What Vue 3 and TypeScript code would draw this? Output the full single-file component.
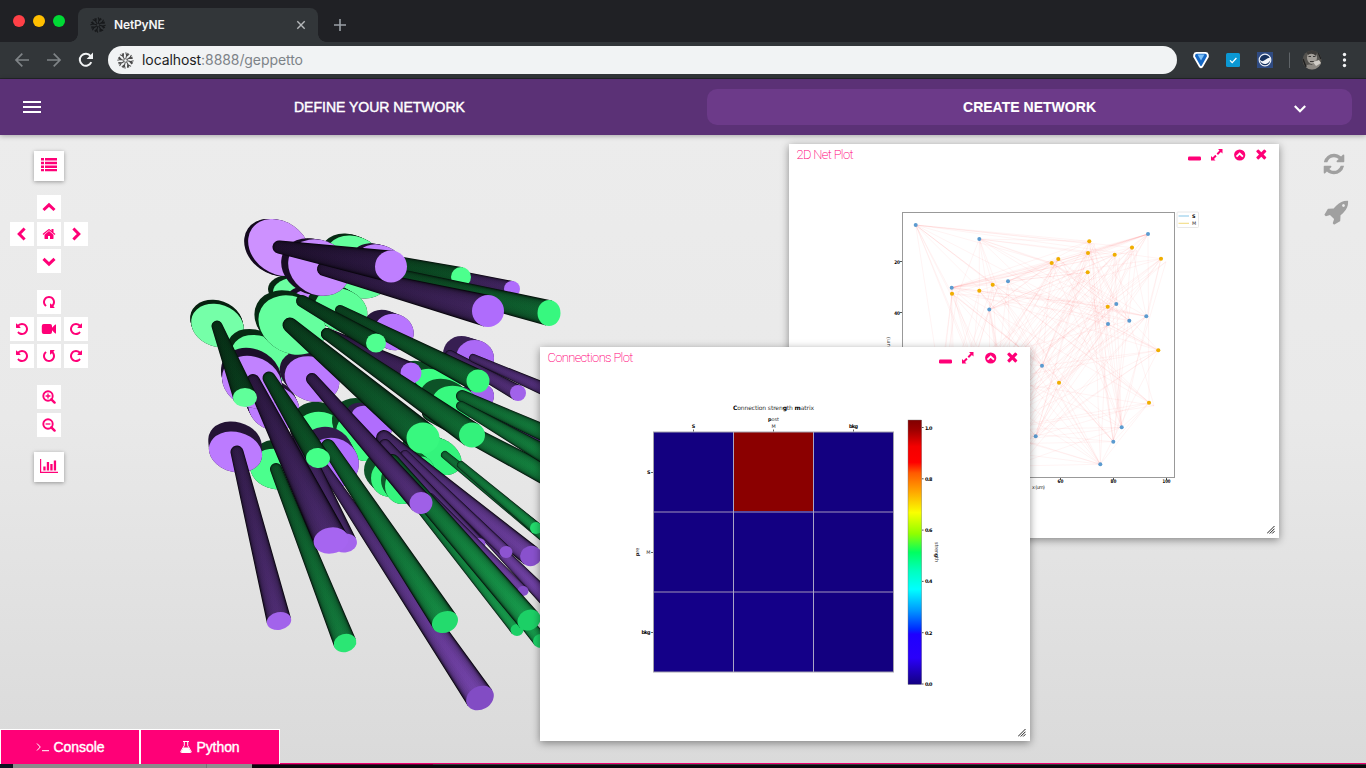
<script setup lang="ts">
type Hue = 'g' | 'p'
interface Soma { kind: 's'; hue: Hue; x: number; y: number; rx: number; ry: number; rot: number; dx: number; dy: number }
interface Tube { kind: 't'; hue: Hue; x0: number; y0: number; w0: number; x1: number; y1: number; rx: number; ry: number; rot: number }

const s = (hue: Hue, x: number, y: number, rx: number, ry: number, rot: number, dx: number, dy: number): Soma =>
  ({ kind: 's', hue, x, y, rx, ry, rot, dx, dy })
const t = (hue: Hue, x0: number, y0: number, w0: number, x1: number, y1: number, rx: number, ry: number, rot = 0): Tube =>
  ({ kind: 't', hue, x0, y0, w0, x1, y1, rx, ry, rot })

const shapes: (Soma | Tube)[] = [
  s('g', 357, 267, 36, 28, 40, -5, -2),
  s('p', 382, 263, 25, 17, 25, -5, -1),
  t('p', 420, 270, 7, 512, 289, 8, 8),
  t('g', 350, 256, 8, 461, 277, 10, 10),
  t('g', 385, 273, 7, 549, 313, 11.5, 13),
  s('g', 297, 292, 24, 15, 0, -5, -3),
  s('p', 306, 302, 14, 12, 0, -5, -3),
  s('g', 341, 310, 27, 21, 20, -7, -4),
  s('p', 279, 247.5, 33, 26, 35, -4, 0),
  s('p', 319, 267.5, 32, 27, 30, -7, -1),
  t('p', 324, 269, 7, 488, 311, 16, 16),
  t('p', 279, 247, 6.5, 391, 266.5, 16, 16),
  s('p', 475, 358, 19, 18, 10, -13, -4),
  s('p', 394, 332, 20, 18, 20, -11, -4),
  s('g', 217.5, 325.5, 27, 21, 20, -1, -4),
  t('p', 450, 355, 5, 518, 393, 8, 8),
  t('p', 473, 358, 4, 558, 395, 7, 7),
  s('p', 482, 396, 12, 12, 0, -8, -2),
  s('g', 437, 382, 24, 12, 15, -14, -8),
  s('g', 455, 403, 23, 17, 10, -12, -7),
  s('g', 262, 359, 32, 22, 25, -4, -6),
  s('p', 274, 408, 26, 22, 20, -3, -6),
  s('p', 252, 382, 31, 25, 25, -1, -8),
  s('g', 321, 430, 24, 18, 10, -3, -10),
  s('g', 363, 436, 28, 24, 30, -4, -13),
  s('p', 372, 422, 22, 14, 30, -5, -3),
  s('p', 312, 379, 28, 22, 20, -5, -6),
  s('p', 332, 463, 27, 25, 15, -6, -11),
  s('g', 390, 478, 19, 19, 0, -7, -8),
  s('g', 402, 486, 17, 18, 0, -4, -6),
  s('g', 439, 456, 24, 17, 30, -14, -6),
  s('g', 425, 471, 10, 15, -20, -10, -8),
  s('g', 292, 325, 35, 28, 28, -4, -5),
  t('p', 327, 334, 6, 411, 373, 10.5, 10.5),
  t('g', 340, 310, 5, 478, 381, 11.5, 11.5),
  t('g', 302, 301, 6, 376, 343, 10, 9.5),
  t('p', 470, 403, 4, 560, 452, 6, 6),
  t('g', 462, 396, 6, 560, 440, 9, 9),
  t('g', 430, 413, 8, 560, 482, 11, 11),
  t('g', 461, 406, 5, 560, 463, 10, 10),
  t('g', 327, 334, 6, 472, 435, 13, 12.5),
  t('g', 445, 455, 4, 560, 548, 7, 7),
  t('g', 461, 465, 4, 536, 528, 6, 6),
  t('p', 384, 438, 8, 531, 556, 11, 10, -20),
  t('p', 470, 520, 4, 552, 604, 9, 8),
  t('p', 405, 455, 5, 506, 552, 6.5, 6),
  t('p', 385, 445, 6, 479, 544, 6.5, 6),
  t('p', 430, 498, 5, 523, 591, 5.5, 5),
  t('g', 470, 555, 5, 541, 641, 8, 7),
  t('g', 395, 475, 5, 517, 630, 6.5, 6),
  t('g', 392, 462, 8, 529, 620, 12, 10, -30),
  t('g', 290, 325, 7.5, 423, 438, 16.5, 15.5),
  t('p', 324, 468, 5, 480, 698, 14.5, 11.5, -30),
  t('g', 328, 446, 7, 445, 622, 13.5, 10.5, -25),
  t('p', 312, 379, 6, 421, 503, 11.5, 11, -10),
  s('g', 276, 469, 26, 20, 10, 2, -9),
  t('p', 296, 430, 6, 345, 543, 12, 9.5, -10),
  t('g', 276, 469, 6, 345, 643, 11.5, 9, -15),
  t('p', 253, 381, 7, 331, 540.5, 17.5, 13, -10),
  t('g', 269, 378, 6.5, 318, 458, 12, 10, 5),
  t('g', 217, 326, 5.5, 245, 397.5, 12, 9.5),
  s('p', 235.5, 452, 27, 20, 15, -0.5, -10),
  t('p', 237, 452, 6.5, 279, 621, 12.3, 8.8, -10),
]

const clamp = (v: number) => Math.max(0, Math.min(1, v))
const mix = (a: number[], b: number[], k: number) => `rgb(${a.map((v, i) => Math.round(v + (b[i] - v) * k)).join(',')})`
const depth = (x: number, y: number) => clamp((x - 200 + (y - 220)) / 720)
function bodyColour(h: Hue, x: number, y: number) {
  const d = Math.pow(depth(x, y), 1.2)
  return h === 'g' ? mix([6, 32, 14], [24, 164, 80], d) : mix([20, 10, 30], [124, 72, 182], d)
}
function faceColour(h: Hue, x: number, y: number) {
  const d = depth(x, y)
  if (h === 'g') return d < 0.55 ? mix([142, 255, 184], [60, 255, 131], d / 0.55) : mix([60, 255, 131], [28, 208, 102], (d - 0.55) / 0.45)
  return d < 0.5 ? mix([216, 160, 255], [178, 110, 255], d / 0.5) : mix([178, 110, 255], [130, 76, 196], (d - 0.5) / 0.5)
}
function endWidth(c: Tube) {
  const len = Math.hypot(c.x1 - c.x0, c.y1 - c.y0)
  const nx = -(c.y1 - c.y0) / len
  const ny = (c.x1 - c.x0) / len
  const a = (c.rot * Math.PI) / 180
  const u = nx * Math.cos(a) + ny * Math.sin(a)
  const v = -nx * Math.sin(a) + ny * Math.cos(a)
  return { nx, ny, w: Math.hypot(c.rx * u, c.ry * v) }
}
function body(c: Tube, f: number) {
  const { nx, ny, w } = endWidth(c)
  const a = c.w0 * f
  const b = w * f
  return `M${c.x0 + nx * a} ${c.y0 + ny * a}A${a} ${a} 0 0 1 ${c.x0 - nx * a} ${c.y0 - ny * a}L${c.x1 - nx * b} ${c.y1 - ny * b}L${c.x1 + nx * b} ${c.y1 + ny * b}Z`
}
const layers = [0.94, 0.88, 0.81, 0.73, 0.63, 0.5, 0.35, 0.2]
const rimSteps = [0, 0.25, 0.5, 0.75, 1]

const senders: [number, number][] = [
  [915.7, 225], [979.3, 239], [1148, 234], [1008, 281.3], [951.7, 287.7], [989.3, 309.5], [1116.3, 304], [1108, 324],
  [1129.3, 320.7], [1146.3, 316.3], [1042, 365.7], [1121.7, 427.3], [1113.3, 441.7], [1100.3, 464.3], [1035.7, 436.3],
  [935, 440], [998, 380], [930, 462], [968, 405], [1010, 452],
]
const receivers: [number, number][] = [
  [1089.3, 241.3], [1088, 253], [1132, 247.6], [1114.7, 254.7], [1161, 258.7], [1058.3, 259], [1051.7, 263], [1087.7, 272.3],
  [992.7, 284.7], [979.3, 290.7], [952, 293.7], [1107.7, 306.7], [1158.3, 350.3], [1059, 382.7], [1149, 402.7],
  [990, 430], [950, 445], [1005, 402], [975, 360], [1012, 466],
]
const links: number[][] = []
senders.forEach((a, i) => receivers.forEach((b, j) => {
  const n = (i * 37 + j * 53 + i * j * 11) % 100
  if (n < 52) links.push([a[0], a[1], b[0], b[1]])
  if (n % 7 === 0) links.push([a[0], a[1], b[0] + 5, b[1] + 3])
}))

const barTicks = ['1.0', '0.8', '0.6', '0.4', '0.2', '0.0']
const cells = ['#130080', '#8b0000', '#130080', '#130082', '#130082', '#130080', '#140088', '#140088', '#130080']
const windows = [
  { id: 'net', title: '2D Net Plot' },
  { id: 'conn', title: 'Connections Plot' },
]
const UNDO = 'M1664 896q0 156-61 298t-164 245-245 164-298 61q-172 0-327-72.5t-264-204.5q-7-10-6.5-22.5t8.5-20.5l137-138q10-9 25-9 16 2 23 12 73 95 179 147t225 52q104 0 198.5-40.5t163.5-109.5 109.5-163.5 40.5-198.5-40.5-198.5-109.5-163.5-163.5-109.5-198.5-40.5q-98 0-188 35.5t-160 101.5l137 138q31 30 14 69-17 40-59 40h-448q-26 0-45-19t-19-45v-448q0-42 40-59 39-17 69 14l130 129q107-101 244.5-156.5t284.5-55.5q156 0 298 61t245 164 164 245 61 298z'
const REPEAT = 'M1664 256v448q0 26-19 45t-45 19h-448q-42 0-59-40-17-39 14-69l138-138q-148-137-349-137-104 0-198.5 40.5t-163.5 109.5-109.5 163.5-40.5 198.5 40.5 198.5 109.5 163.5 163.5 109.5 198.5 40.5q119 0 225-52t179-147q7-10 23-12 15 0 25 9l137 138q9 8 9.5 20.5t-7.5 22.5q-109 132-264 204.5t-327 72.5q-156 0-298-61t-245-164-164-245-61-298 61-298 164-245 245-164 298-61q147 0 284.5 55.5t244.5 156.5l130-129q29-31 70-14 39 17 39 59z'
const REFRESH = 'M1639 1056q0 5-1 7-64 268-268 434.5t-478 166.5q-146 0-282.5-55t-243.5-157l-129 129q-19 19-45 19t-45-19-19-45v-448q0-26 19-45t45-19h448q26 0 45 19t19 45-19 45l-137 137q71 66 161 102t187 36q134 0 250-65t186-179q11-17 53-117 8-23 30-23h192q13 0 22.5 9.5t9.5 22.5zm25-800v448q0 26-19 45t-45 19h-448q-26 0-45-19t-19-45 19-45l138-138q-148-137-349-137-134 0-250 65t-186 179q-11 17-53 117-8 23-30 23h-199q-13 0-22.5-9.5t-9.5-22.5v-7q65-268 270-434.5t480-166.5q146 0 284 55.5t245 156.5l130-129q19-19 45-19t45 19 19 45z'
const ROCKET = 'M1440 448q0-40-28-68t-68-28-68 28-28 68 28 68 68 28 68-28 28-68zm224-288q0 249-75.5 430.5t-253.5 360.5q-81 80-195 176l-20 379q-2 16-16 26l-384 224q-7 4-16 4-12 0-23-9l-64-64q-13-14-8-32l85-276-281-281-276 85q-3 1-9 1-14 0-23-9l-64-64q-17-19-5-39l224-384q10-14 26-16l379-20q96-114 176-195 188-187 358-258t431-71q14 0 24 9.5t10 22.5z'
const HOME = 'M1472 992v480q0 26-19 45t-45 19h-384v-384h-256v384h-384q-26 0-45-19t-19-45v-480q0-1 .5-3t.5-3l575-474 575 474q1 2 1 6zm223-69l-62 74q-8 9-21 11h-3q-13 0-21-7l-692-577-692 577q-12 8-24 7-13-2-21-11l-62-74q-8-10-7-23.5t11-21.5l719-599q32-26 76-26t76 26l244 204v-195q0-14 9-23t23-9h192q14 0 23 9t9 23v408l219 182q10 8 11 21.5t-7 23.5z'
const CLOSE = 'M1490 1322q0 40-28 68l-136 136q-28 28-68 28t-68-28l-294-294-294 294q-28 28-68 28t-68-28l-136-136q-28-28-28-68t28-68l294-294-294-294q-28-28-28-68t28-68l136-136q28-28 68-28t68 28l294 294 294-294q28-28 68-28t68 28l136 136q28 28 28 68t-28 68l-294 294 294 294q28 28 28 68z'
const branches = Array.from({ length: 8 }, (_, i) => i * 45)
</script>

<template>
  <div class="screen">
    <div class="tabbar">
      <div class="lights"><i class="red"></i><i class="amber"></i><i class="green"></i></div>
      <div class="tab">
        <svg class="burst" viewBox="-8 -8 16 16" width="16" height="16">
          <path v-for="a in branches" :key="a" d="M1.200 0L5 .3L7.600 -.8M3.600 .1L6.500 2.600M5 .3L7.200 1.600" :transform="`rotate(${a + 8})`" fill="none" stroke="#17191b" stroke-width="1.100" />
        </svg>
        <span>NetPyNE</span>
        <svg class="tabx" viewBox="0 0 10 10" width="10" height="10"><path d="M1.300 1.300L8.700 8.700M8.700 1.300L1.300 8.700" stroke="#b5b8ba" stroke-width="1.400" /></svg>
      </div>
      <svg class="plus" viewBox="0 0 12 12" width="12" height="12"><path d="M6 0V12M0 6H12" stroke="#9aa0a6" stroke-width="1.600" /></svg>
    </div>

    <div class="toolbar">
      <svg class="nav" viewBox="0 0 100 36" width="100" height="36" fill="none">
        <path d="M29 18H16M22.300 11.700L16 18L22.300 24.300" stroke="#7f8487" stroke-width="1.700" />
        <path d="M47 18H60M53.700 11.700L60 18L53.700 24.300" stroke="#7f8487" stroke-width="1.700" />
        <path d="M91.300 20.200A6 6 0 1 1 90.600 14.100" stroke="#f1f3f4" stroke-width="2" />
        <path d="M93 10.600V17H86.600Z" fill="#f1f3f4" />
      </svg>
      <div class="omnibox">
        <svg viewBox="-8 -8 16 16" width="17" height="17">
          <path v-for="a in branches" :key="a" d="M1.200 0L5 .3L7.600 -.8M3.600 .1L6.500 2.600M5 .3L7.200 1.600" :transform="`rotate(${a + 8})`" fill="none" stroke="#4a4a4a" stroke-width=".95" />
        </svg>
        <span class="url">localhost<em>:8888/geppetto</em></span>
      </div>
      <svg class="ext" viewBox="0 0 189 36" width="189" height="36">
        <path d="M19.500 10h9q2.500 0 3.200 2.400.6 2-.8 4L26 25q-2 2.500-4 0l-4.900-8.600q-1.400-2-.8-4Q17 10 19.500 10z" fill="#fff" />
        <path d="M20 11.800h8q2.300.3 1.800 2.800L24.800 23.500q-.8 1-1.600 0L18.200 14.600q-.5-2.500 1.800-2.800z" fill="#1567c4" />
        <path d="M20.500 12.600h7l-3.500 6z" fill="#7cc0f7" />
        <rect x="49" y="11" width="14" height="14" rx="1.500" fill="#0b98d4" />
        <path d="M53 18.400l2.200 2.200 4.200-4.600" fill="none" stroke="#fff" stroke-width="1.300" />
        <rect x="80" y="10" width="16" height="16" fill="#2f4b82" />
        <circle cx="88" cy="18" r="5.800" fill="#17325f" stroke="#e8edf5" stroke-width="1.200" />
        <path d="M82.600 17.500q2.700 3 5.400 .5t5.400-2.500a5.400 5.400 0 0 1-10.800 2z" fill="#f3f5f8" />
        <path d="M112.500 10.500V26" stroke="#5f6468" />
        <clipPath id="av"><circle cx="135" cy="18" r="9.500" /></clipPath>
        <g clip-path="url(#av)">
          <rect x="125" y="8" width="20" height="20" fill="#55534f" />
          <ellipse cx="135" cy="15.500" rx="5" ry="6.500" fill="#a39f99" />
          <path d="M129 9q6-4 11 1l-1 4q-4-4-8-1z" fill="#3d3b39" />
          <path d="M131.500 14.500h2.500m2 0h2.500M133 19.500h4" stroke="#3a3836" stroke-width="1.200" />
          <path d="M127 28q2-7 8-5l3-5 6 3v7z" fill="#8d8983" />
          <path d="M136 20l6-2 2 3-5 3z" fill="#d0ccc6" />
          <path d="M126 17l3 8M141 10l3 7" stroke="#222" stroke-width="1.500" />
        </g>
        <g fill="#f1f3f4"><circle cx="167.500" cy="12.500" r="1.700" /><circle cx="167.500" cy="18" r="1.700" /><circle cx="167.500" cy="23.500" r="1.700" /></g>
      </svg>
    </div>

    <header class="appbar">
      <div class="half">
        <div class="burger"><i></i><i></i><i></i></div>
        <span class="label">DEFINE YOUR NETWORK</span>
      </div>
      <div class="create">
        <span class="label bold">CREATE NETWORK</span>
        <svg viewBox="0 0 14 10" width="14" height="10"><path d="M1.800 2L7 7.200L12.200 2" fill="none" stroke="#fff" stroke-width="2.200" /></svg>
      </div>
    </header>

    <main class="canvas">
      <svg class="scene" viewBox="0 135 600 629" width="600" height="629" shape-rendering="geometricPrecision">
        <defs>
          <template v-for="(c, i) in shapes" :key="i">
            <linearGradient v-if="c.kind === 't'" :id="`b${i}`" gradientUnits="userSpaceOnUse" :x1="c.x0" :y1="c.y0" :x2="c.x1" :y2="c.y1">
              <stop offset="0" :stop-color="bodyColour(c.hue, c.x0, c.y0)" />
              <stop offset="1" :stop-color="bodyColour(c.hue, c.x1, c.y1)" />
            </linearGradient>
          </template>
        </defs>
        <template v-for="(c, i) in shapes" :key="i">
          <g v-if="c.kind === 's'">
            <ellipse v-for="k in rimSteps" :key="k" :rx="c.rx" :ry="c.ry" :transform="`translate(${c.x + c.dx * k} ${c.y + c.dy * k}) rotate(${c.rot})`" :fill="bodyColour(c.hue, c.x - 60, c.y - 60)" />
            <ellipse :rx="c.rx" :ry="c.ry" :transform="`translate(${c.x} ${c.y}) rotate(${c.rot})`" :fill="faceColour(c.hue, c.x, c.y)" />
          </g>
          <g v-else>
            <path :d="body(c, 1)" :fill="c.hue === 'g' ? '#04100a' : '#09050e'" />
            <path v-for="f in layers" :key="f" :d="body(c, f)" :fill="`url(#b${i})`" opacity="0.28" />
            <ellipse :rx="c.rx" :ry="c.ry" :transform="`translate(${c.x1} ${c.y1}) rotate(${c.rot})`" :fill="faceColour(c.hue, c.x1, c.y1)" />
          </g>
        </template>
      </svg>

      <div class="controls">
        <button class="big"><svg viewBox="0 0 16 14" width="16" height="14" fill="#ff0077"><path d="M0 0h3v2.500H0zM4 0h12v2.500H4zM0 3.700h3v2.500H0zM4 3.700h12v2.500H4zM0 7.400h3v2.500H0zM4 7.400h12v2.500H4zM0 11h3v2.300H0zM4 11h12v2.300H4z" /></svg></button>
        <div class="pad">
          <button class="mid"><svg viewBox="0 0 14 14" width="14" height="14"><path d="M1.500 10L7 4.800L12.500 10" class="chev" /></svg></button>
          <button class="left"><svg viewBox="0 0 14 14" width="14" height="14"><path d="M9.600 1.500L4.200 7L9.600 12.500" class="chev" /></svg></button>
          <button><svg viewBox="0 0 1792 1792" width="14" height="14"><path :d="HOME" fill="#ff0077" /></svg></button>
          <button><svg viewBox="0 0 14 14" width="14" height="14"><path d="M4.400 1.500L9.800 7L4.400 12.500" class="chev" /></svg></button>
          <button class="mid"><svg viewBox="0 0 14 14" width="14" height="14"><path d="M1.500 4.900L7 10.100L12.500 4.900" class="chev" /></svg></button>
        </div>
        <div class="pad rot">
          <button class="mid"><svg viewBox="0 0 1792 1792" width="14" height="14"><path :d="REPEAT" fill="#ff0077" transform="rotate(90 896 896)" /></svg></button>
          <button class="left"><svg viewBox="0 0 1792 1792" width="14" height="14"><path :d="UNDO" fill="#ff0077" /></svg></button>
          <button><svg viewBox="0 0 16 14" width="16" height="14"><path d="M2.800 2H9a2 2 0 0 1 2 2v1.800L14.200 2.600q.8-.5.8.4v8q0 .9-.8.4L11 8.200V10a2 2 0 0 1-2 2H2.800a2 2 0 0 1-2-2V4a2 2 0 0 1 2-2z" fill="#ff0077" /></svg></button>
          <button><svg viewBox="0 0 1792 1792" width="14" height="14"><path :d="REPEAT" fill="#ff0077" /></svg></button>
          <button><svg viewBox="0 0 1792 1792" width="14" height="14"><path :d="UNDO" fill="#ff0077" /></svg></button>
          <button><svg viewBox="0 0 1792 1792" width="14" height="14"><path :d="UNDO" fill="#ff0077" transform="rotate(90 896 896)" /></svg></button>
          <button><svg viewBox="0 0 1792 1792" width="14" height="14"><path :d="REPEAT" fill="#ff0077" /></svg></button>
        </div>
        <div class="zoom">
          <button v-for="z in ['M6 3.600V8.400M3.600 6H8.400', 'M3.600 6H8.400']" :key="z">
            <svg viewBox="0 0 14 14" width="14" height="14" fill="none" stroke="#ff0077"><circle cx="6" cy="6" r="4.700" stroke-width="1.900" /><path d="M9.300 9.300L12.600 12.600" stroke-width="2.400" stroke-linecap="round" /><path :d="z" stroke-width="1.300" /></svg>
          </button>
        </div>
        <button class="big"><svg viewBox="0 0 18 14" width="18" height="14" fill="#ff0077"><path d="M0 0h1.200v12.800H18V14H0zM3.300 7.500h2.300v4H3.300zM6.800 3h2.300v8.500H6.800zM10.300 5h2.300v6.500h-2.300zM13.800 1.500h2.300v10h-2.300z" /></svg></button>
      </div>

      <div class="side">
        <svg viewBox="0 0 1792 1792" width="24" height="24"><path :d="REFRESH" fill="#a0a0a0" /></svg>
        <svg class="rocket" viewBox="0 0 1792 1792" width="26" height="26"><path :d="ROCKET" fill="#a0a0a0" fill-rule="evenodd" /></svg>
      </div>

      <section v-for="w in windows" :key="w.id" class="window" :class="w.id">
        <div class="titlebar">
          <h2>{{ w.title }}</h2>
          <svg viewBox="0 0 82 14" width="82" height="14">
            <rect x="0" y="8.500" width="13" height="4" rx="1.200" fill="#ff0077" />
            <g transform="translate(23 1)" fill="#ff0077"><path d="M7 0H11.500V4.500L9.900 3 7 5.900 5.600 4.500 8.500 1.600zM0 11.500V7L1.600 8.500 4.300 5.800 5.700 7.200 3 9.900 4.500 11.500z" /><path d="M4.200 5.200L6.300 7.300" stroke="#fff" stroke-width=".8" /></g>
            <circle cx="51.700" cy="7" r="5.600" fill="#ff0077" />
            <path d="M48.500 8.600L51.700 5.500L54.900 8.600" fill="none" stroke="#fff" stroke-width="1.900" />
            <svg x="65.800" y="-.5" width="15" height="15" viewBox="0 0 1792 1792"><path :d="CLOSE" fill="#ff0077" transform="translate(0 -130)" /></svg>
          </svg>
        </div>

        <svg v-if="w.id === 'net'" class="plot" viewBox="789 166 490 372" width="490" height="372">
          <g stroke="#ff3030" stroke-width=".7" stroke-opacity=".075"><path v-for="(l, i) in links" :key="i" :d="`M${l[0]} ${l[1]}L${l[2]} ${l[3]}`" /></g>
          <rect x="902.500" y="212.500" width="272" height="265" fill="none" stroke="#999" />
          <circle v-for="p in senders" :key="`a${p}`" :cx="p[0]" :cy="p[1]" r="2" fill="#5b9bd0" />
          <circle v-for="p in receivers" :key="`b${p}`" :cx="p[0]" :cy="p[1]" r="2.050" fill="#f0ae00" />
          <path d="M900 261.500h2M900 312.500h2M1060.500 478v2M1113.500 478v2M1166.500 478v2" stroke="#555" />
          <rect x="1177" y="212" width="21.500" height="15.500" rx="1" fill="#fff" stroke="#e8e8e8" />
          <path d="M1178.500 216h10.500" stroke="#bcdff2" stroke-width="1.800" /><path d="M1178.500 223.300h10.500" stroke="#f2dc84" stroke-width="1.100" />
          <g class="tiny">
            <text x="1192" y="218" class="b">S</text><text x="1192" y="225">M</text>
            <text x="900" y="263.500" text-anchor="end" class="b" textLength="5.800" lengthAdjust="spacingAndGlyphs">20</text><text x="900" y="314.500" text-anchor="end" class="b" textLength="5.800" lengthAdjust="spacingAndGlyphs">40</text>
            <text x="1060.500" y="483" text-anchor="middle" class="b" textLength="5.800" lengthAdjust="spacingAndGlyphs">60</text><text x="1113.500" y="483" text-anchor="middle" class="b" textLength="5.800" lengthAdjust="spacingAndGlyphs">80</text><text x="1166.500" y="483" text-anchor="middle" class="b" textLength="8" lengthAdjust="spacingAndGlyphs">100</text>
            <text x="1038.500" y="489" text-anchor="middle" textLength="13">x (um)</text>
            <text transform="translate(890 345) rotate(-90)" text-anchor="middle">y (um)</text>
          </g>
        </svg>

        <svg v-else class="plot" viewBox="540 369 490 372" width="490" height="372">
          <defs>
            <linearGradient id="jet" x1="0" y1="0" x2="0" y2="1">
              <stop offset="0" stop-color="#800000" /><stop offset=".04" stop-color="#a00000" /><stop offset=".1" stop-color="#f40000" /><stop offset=".16" stop-color="#ff0000" />
              <stop offset=".2" stop-color="#ff5a00" /><stop offset=".27" stop-color="#ffa500" /><stop offset=".35" stop-color="#faff00" /><stop offset=".43" stop-color="#90ff00" />
              <stop offset=".5" stop-color="#00ff60" /><stop offset=".57" stop-color="#00ffbe" /><stop offset=".64" stop-color="#00ffff" /><stop offset=".72" stop-color="#0098ff" />
              <stop offset=".79" stop-color="#002cff" /><stop offset=".81" stop-color="#1e00ff" /><stop offset=".9" stop-color="#2a00fa" /><stop offset="1" stop-color="#130080" />
            </linearGradient>
          </defs>
          <rect v-for="(c, i) in cells" :key="i" :x="653.500 + (i % 3) * 80" :y="432 + Math.floor(i / 3) * 80" width="80" height="80" :fill="c" />
          <path d="M653.500 512h240M653.500 592h240" stroke="#5a4a9e" stroke-width="2" />
          <path d="M733.500 432v240M813.500 432v240" stroke="#a9a5c6" />
          <rect x="653.500" y="432" width="240" height="240" fill="none" stroke="#a3a1ad" />
          <rect x="908" y="420" width="13.700" height="264.500" fill="url(#jet)" stroke="#777" stroke-width=".4" />
          <path d="M693.500 429.500v2M773.500 429.500v2M853.500 429.500v2M651 472.500h2M651 552.500h2M651 632.500h2" stroke="#555" stroke-width=".9" />
          <g class="tiny">
            <text x="773.500" y="409.700" class="head" text-anchor="middle" textLength="81"><tspan class="b">C</tspan>onnection stren<tspan class="b">g</tspan>th <tspan class="b">m</tspan>atrix</text>
            <text x="773.500" y="421.300" text-anchor="middle" textLength="11"><tspan class="b">p</tspan>ost</text>
            <text x="693.500" y="427.800" text-anchor="middle" class="b">S</text><text x="773.500" y="427.800" text-anchor="middle">M</text><text x="853.500" y="427.800" text-anchor="middle" class="b" textLength="9">bkg</text>
            <text x="650.500" y="474" text-anchor="end" class="b">S</text><text x="650.500" y="554" text-anchor="end">M</text><text x="650.500" y="634" text-anchor="end" class="b" textLength="9">bkg</text>
            <text transform="translate(638.500 552) rotate(-90)" text-anchor="middle"><tspan class="b">p</tspan>re</text>
            <text transform="translate(935 552) rotate(90)" text-anchor="middle" textLength="20">stren<tspan class="b">g</tspan>th</text>
            <template v-for="(k, i) in barTicks" :key="k">
              <path :d="`M922 ${427.500 + i * 51.300}h1.600`" stroke="#555" />
              <text x="925" :y="429.500 + i * 51.300" class="b" textLength="7.500">{{ k }}</text>
            </template>
          </g>
        </svg>
        <svg class="grip" viewBox="0 0 8 8" width="8" height="8"><path d="M0 7.500L7.500 0M2.700 7.500L7.500 2.700M5.200 7.500L7.500 5.200" stroke="#222" stroke-width="1" /></svg>
      </section>

      <div class="drawer">
        <button><svg viewBox="0 0 14 12" width="14" height="12"><path d="M1 2.500L4.300 6L1 9.500M6 9.700H13" fill="none" stroke="#fff" stroke-width="1" /></svg>Console</button>
        <button><svg viewBox="0 0 12 12" width="12" height="12"><path d="M3 .5H9M4.300 .5V4.500L.9 10.300q-.5 1.200.6 1.200h9q1.100 0 .6-1.200L7.700 4.500V.5" fill="none" stroke="#fff" stroke-width="1" /><path d="M3.500 6.500h5l2.600 4.800H.9z" fill="#fff" /></svg>Python</button>
        <i class="line"></i>
      </div>
    </main>
    <div class="strip"><i class="a"></i><i class="b"></i><i class="c"></i><i class="d"></i><i class="e"></i></div>
  </div>
</template>

<style>
body { overflow: hidden; }
</style>

<style scoped>
.screen { width: 1366px; height: 768px; display: flex; flex-direction: column; overflow: hidden; font-family: "Liberation Sans", Arial, sans-serif; }
.tabbar { height: 42px; background: #202125; display: flex; align-items: flex-start; flex: none; }
.lights { display: flex; gap: 8px; padding: 15px 0 0 13px; width: 78px; box-sizing: border-box; }
.lights i { width: 12px; height: 12px; border-radius: 50%; flex: none; }
.red { background: #ff4047; } .amber { background: #ffbf00; } .green { background: #00da35; }
.tab { width: 240px; height: 34px; margin-top: 8px; background: #323639; border-radius: 8px 8px 0 0; display: flex; align-items: center; box-sizing: border-box; padding: 0 12px 0 12px; position: relative; }
.tab::before, .tab::after { content: ""; position: absolute; bottom: 0; width: 8px; height: 8px; }
.tab::before { left: -8px; background: radial-gradient(circle at 0 0, transparent 7.5px, #323639 8px); }
.tab::after { right: -8px; background: radial-gradient(circle at 100% 0, transparent 7.5px, #323639 8px); }
.tab span { margin-left: 8px; color: #f4f5f5; font: 600 12px/16px Inter, sans-serif; letter-spacing: -.15px; flex: 1; }
.plus { margin: 19px 0 0 16px; }
.toolbar { height: 37px; box-sizing: border-box; background: #323639; border-bottom: 1px solid #232629; display: flex; align-items: center; flex: none; }
.nav { margin-right: 8px; flex: none; }
.omnibox { width: 1069px; height: 28px; border-radius: 14px; background: #f1f3f4; display: flex; align-items: center; padding-left: 9px; box-sizing: border-box; flex: none; }
.url { margin-left: 8px; font: 400 14px/20px Inter, sans-serif; color: #1c1d1f; letter-spacing: -.08px; }
.url em { font-style: normal; color: #7d8388; }
.ext { flex: none; }
.appbar { height: 56px; background: #5b3176; display: flex; align-items: center; flex: none; position: relative; z-index: 2; box-shadow: 0 1px 5px rgba(0,0,0,.3); }
.half { width: 707px; display: flex; align-items: center; }
.burger { width: 18px; margin-left: 23px; display: flex; flex-direction: column; gap: 3px; }
.burger i { height: 2px; background: #fff; }
.half .label { margin-left: 253px; }
.label { color: #fff; font-size: 14px; line-height: 18px; -webkit-text-stroke: .45px #fff; white-space: nowrap; }
.label.bold { font-weight: 700; letter-spacing: .02px; -webkit-text-stroke: .1px #fff; flex: 1; text-align: left; padding-left: 256px; }
.create { width: 645px; height: 36px; border-radius: 10px; background: #6c3a89; display: flex; align-items: center; box-sizing: border-box; padding-right: 45px; }
.create svg { margin-top: 4px; }
.canvas { flex: none; height: 629px; background: linear-gradient(#ececec, #e9e9e9 45%, #dadada); position: relative; }
.scene { position: absolute; left: 0; top: 0; }
.controls { position: relative; width: 98px; padding-top: 16px; display: flex; flex-direction: column; align-items: center; }
button { border: 0; padding: 0; margin: 0; background: #fff; width: 24px; height: 24px; display: flex; align-items: center; justify-content: center; }
.big { width: 30px; height: 30px; box-shadow: 0 1px 4px rgba(0,0,0,.35); }
.big svg { margin-top: -2px; }
.pad { display: grid; grid-template-columns: repeat(3, 24px); gap: 3px; margin-top: 14px; }
.pad.rot { margin-top: 17px; }
.mid { grid-column: 2; } .left { grid-column: 1; }
.chev { fill: none; stroke: #ff0077; stroke-width: 3; }
.zoom { display: flex; flex-direction: column; gap: 4px; margin: 17px 0 15px; }
.side { position: absolute; right: 18px; top: 17px; width: 28px; display: flex; flex-direction: column; gap: 23px; align-items: center; }
.rocket { align-self: flex-start; margin-left: 4px; }
.window { position: absolute; width: 490px; height: 394px; background: #fff; box-shadow: 0 2px 8px rgba(0,0,0,.42); }
.net { left: 789px; top: 9px; }
.conn { left: 540px; top: 212px; }
.titlebar { height: 22px; display: flex; justify-content: space-between; align-items: center; padding: 0 9px 0 7.5px; box-sizing: border-box; }
.titlebar svg { margin-top: -1px; }
.titlebar h2 { margin: 0; font: 200 13px/20px Roboto, sans-serif; color: #ff0077; letter-spacing: -.68px; }
.plot { display: block; }
.tiny { font-family: "DejaVu Sans", sans-serif; font-size: 4.9px; fill: #333; }
.tiny .head { font-size: 6px; }
.tiny .b { font-weight: 700; fill: #000; }
.grip { position: absolute; right: 4px; bottom: 4px; }
.drawer { position: absolute; left: 0; bottom: 0; width: 1366px; height: 35px; display: flex; align-items: flex-end; }
.drawer button { width: 140px; height: 35px; background: #ff0077; border: solid #fff; border-width: 1px 1px 0 1px; color: #fff; font: 400 14px/20px "Liberation Sans", Arial, sans-serif; -webkit-text-stroke: .4px #fff; gap: 4px; flex: none; box-sizing: border-box; letter-spacing: -.08px; }
.drawer .line { flex: 1; height: 1px; background: #f0006f; }
.strip { height: 4px; background: #0a080c; display: flex; flex: none; }
.strip .a { width: 13px; background: #0d1420; } .strip .b { width: 193px; background: #8b8b8b; } .strip .c { width: 45px; background: #8f8f8f; border-left: 1px solid #777; }
.strip .d { width: 181px; height: 1px; background: #5a0030; } .strip .e { flex: 1; height: 1px; background: #3a363c; }
</style>
